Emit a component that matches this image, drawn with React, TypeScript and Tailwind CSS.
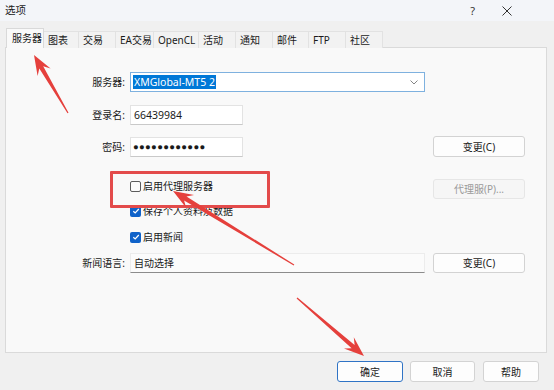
import React from 'react';

const tabs = [
  { label: '服务器', w: 'w-[38px]' },
  { label: '图表', w: 'w-[35px]' },
  { label: '交易', w: 'w-[37px]' },
  { label: 'EA交易', w: 'w-[38px]' },
  { label: 'OpenCL', w: 'w-[45px]' },
  { label: '活动', w: 'w-[37px]' },
  { label: '通知', w: 'w-[37px]' },
  { label: '邮件', w: 'w-[36px]' },
  { label: 'FTP', w: 'w-[37px]' },
  { label: '社区', w: 'w-[37px]' },
];

// tapered annotation arrow, tail -> tip
const arrowPoints = (tx: number, ty: number, px: number, py: number, head = 20, headW = 15, shaftW = 4.5) => {
  const dx = px - tx;
  const dy = py - ty;
  const len = Math.hypot(dx, dy);
  const ux = dx / len;
  const uy = dy / len;
  const nx = -uy;
  const ny = ux;
  const bx = px - ux * head;
  const by = py - uy * head;
  const jx = px - ux * head * 0.72;
  const jy = py - uy * head * 0.72;
  const pts = [
    [tx + nx * 0.6, ty + ny * 0.6],
    [jx + (nx * shaftW) / 2, jy + (ny * shaftW) / 2],
    [bx + (nx * headW) / 2, by + (ny * headW) / 2],
    [px, py],
    [bx - (nx * headW) / 2, by - (ny * headW) / 2],
    [jx - (nx * shaftW) / 2, jy - (ny * shaftW) / 2],
    [tx - nx * 0.6, ty - ny * 0.6],
  ];
  return pts.map((p) => p.map((v) => v.toFixed(1)).join(',')).join(' ');
};

const Button = ({ children, className = '', disabled = false }: { children: React.ReactNode; className?: string; disabled?: boolean }) => (
  <div
    className={`flex items-center justify-center rounded-[3px] border ${
      disabled ? 'border-[#e6e6e6] bg-[#f6f6f6] text-[#9a9a9a]' : 'border-[#d3d3d3] bg-[#fdfdfd] text-[#1a1a1a]'
    } ${className}`}
  >
    {children}
  </div>
);

const Check = ({ checked }: { checked: boolean }) =>
  checked ? (
    <div className="flex h-[11px] w-[11px] items-center justify-center rounded-[2px] bg-[#0f62c9]">
      <svg width="8" height="8" viewBox="0 0 8 8">
        <path d="M1.3 4.2 L3.2 6 L6.8 2" fill="none" stroke="#fff" strokeWidth="1.2" />
      </svg>
    </div>
  ) : (
    <div className="h-[11px] w-[11px] rounded-[2px] border border-[#5c5c5c] bg-[#fbfbfb]" />
  );

export default function App() {
  return (
    <div className="relative h-[390px] w-[554px] overflow-hidden bg-[#f0f0f0] font-['Noto_Sans','Noto_Sans_CJK_SC',sans-serif] text-[10px] leading-none text-[#1a1a1a]">
      {/* title bar */}
      <div className="flex h-[21px] items-center bg-[#f3f5f9] pl-[5px]">
        <span className="text-[10.5px]">选项</span>
        <span className="ml-auto text-[11px] text-[#333]">?</span>
        <svg className="ml-[27px] mr-[42px]" width="10" height="10" viewBox="0 0 10 10">
          <path d="M0.5 0.5 L9.5 9.5 M9.5 0.5 L0.5 9.5" stroke="#333" strokeWidth="1" />
        </svg>
      </div>

      {/* tabs */}
      <div className="relative z-10 mt-[8px] flex h-[19px] items-end pl-[6px]">
        {tabs.map((t, i) =>
          i === 0 ? (
            <div key={t.label} className={`${t.w} flex h-[20px] items-center border border-b-0 border-[#d9d9d9] bg-[#f9f9f9] pl-[5px] pb-[1px]`}>
              {t.label}
            </div>
          ) : (
            <div key={t.label} className={`${t.w} flex h-[17px] items-center border-t border-r border-[#e2e2e2] bg-[#f2f2f2] pl-[4px]`}>
              {t.label}
            </div>
          )
        )}
      </div>

      {/* panel */}
      <div className="-mt-px ml-[5px] mr-[7px] h-[306px] border border-[#dadada] bg-[#f9f9f9] pr-[21px]">
        {/* 服务器 */}
        <div className="mt-[24px] flex h-[20px] items-center">
          <div className="w-[119px] text-right">服务器:</div>
          <div className="ml-[5px] flex h-[20px] w-[295px] items-center border border-[#7eb1df] bg-white pl-[2px] pr-[6px]">
            <span className="bg-[#0078d7] px-[1px] py-[2px] text-[10.5px] text-white">XMGlobal-MT5 2</span>
            <svg className="ml-auto" width="8" height="5" viewBox="0 0 8 5">
              <path d="M0.5 0.5 L4 4 L7.5 0.5" fill="none" stroke="#777" strokeWidth="0.9" />
            </svg>
          </div>
        </div>

        {/* 登录名 */}
        <div className="mt-[13px] flex h-[20px] items-center">
          <div className="w-[119px] text-right">登录名:</div>
          <div className="ml-[5px] flex h-[20px] w-[113px] items-center border border-[#e3e3e3] border-b-[#c9c9c9] bg-white pl-[3px] text-[10.5px]">
            66439984
          </div>
        </div>

        {/* 密码 */}
        <div className="mt-[11px] flex h-[21px] items-center">
          <div className="w-[119px] text-right">密码:</div>
          <div className="ml-[5px] flex h-[20px] w-[113px] items-center border border-[#e3e3e3] border-b-[#c9c9c9] bg-white pl-[2px] font-['Liberation_Sans',sans-serif] text-[9.5px] tracking-[0.3px]">
            ●●●●●●●●●●●●
          </div>
          <Button className="ml-auto h-[21px] w-[92px]">变更(C)</Button>
        </div>

        {/* 代理 */}
        <div className="mt-[22px] flex h-[20px] items-center">
          <div className="ml-[124px] -mt-[6px] flex items-center gap-[2px]">
            <Check checked={false} />
            <span>启用代理服务器</span>
          </div>
          <Button disabled className="ml-auto h-[20px] w-[92px]">代理服(P)...</Button>
        </div>

        <div className="mt-[5px] flex h-[14px] items-center pl-[124px] gap-[2px]">
          <Check checked />
          <span>保存个人资料及数据</span>
        </div>

        <div className="mt-[12px] flex h-[14px] items-center pl-[124px] gap-[2px]">
          <Check checked />
          <span>启用新闻</span>
        </div>

        {/* 新闻语言 */}
        <div className="mt-[9px] flex h-[20px] items-center">
          <div className="w-[119px] text-right">新闻语言:</div>
          <div className="ml-[5px] flex h-[20px] w-[295px] items-center border border-[#ececec] border-b-[#8c8c8c] bg-[#fbfbfb] pl-[3px]">
            自动选择
          </div>
          <Button className="ml-auto h-[20px] w-[92px]">变更(C)</Button>
        </div>
      </div>

      {/* bottom buttons */}
      <div className="mt-[8px] flex h-[21px] items-center pl-[337px] gap-[7px]">
        <Button className="h-[21px] w-[66px] !border-[#2f73c5]">确定</Button>
        <Button className="h-[21px] w-[65px]">取消</Button>
        <Button className="ml-[1px] h-[21px] w-[56px]">帮助</Button>
      </div>

      {/* annotations */}
      <div className="pointer-events-none absolute left-[110px] top-[171px] h-[37px] w-[160px] rounded-[1px] border-[3px] border-[#e34b4b]" />
      <svg className="pointer-events-none absolute left-0 top-0" width="554" height="390">
        <polygon points={arrowPoints(68, 113, 34, 55)} fill="#e5403c" />
        <polygon points={arrowPoints(294, 265, 173, 191)} fill="#e5403c" />
        <polygon points={arrowPoints(297, 298, 364, 356)} fill="#e5403c" />
      </svg>
    </div>
  );
}
